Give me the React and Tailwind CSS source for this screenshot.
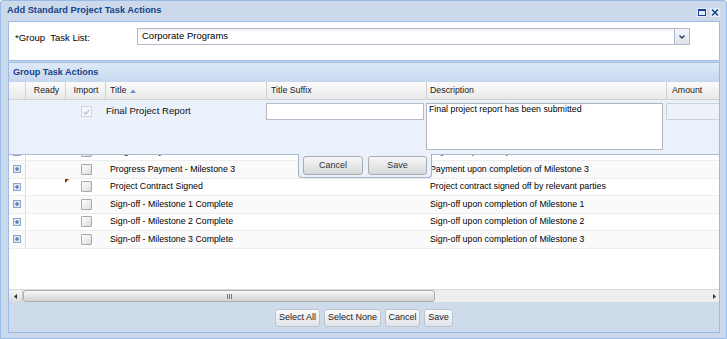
import React from 'react';

const rows = [
  { title: '', desc: '' },
  { title: '', desc: '' },
  { title: 'Progress Payment - Milestone 2', desc: 'Payment upon completion of Milestone 2' },
  { title: 'Progress Payment - Milestone 3', desc: 'Payment upon completion of Milestone 3' },
  { title: 'Project Contract Signed', desc: 'Project contract signed off by relevant parties', dirty: true },
  { title: 'Sign-off - Milestone 1 Complete', desc: 'Sign-off upon completion of Milestone 1' },
  { title: 'Sign-off - Milestone 2 Complete', desc: 'Sign-off upon completion of Milestone 2' },
  { title: 'Sign-off - Milestone 3 Complete', desc: 'Sign-off upon completion of Milestone 3' },
];

function Expander() {
  return (
    <svg width="8" height="8" viewBox="0 0 8 8">
      <rect x="0.5" y="0.5" width="7" height="7" fill="#dbe5f3" stroke="#8ea8cd" />
      <path d="M2 4h4M4 2v4" stroke="#3a5f94" strokeWidth="1" />
    </svg>
  );
}

function Checkbox() {
  return <div className="w-[11px] h-[11px] border border-[#a8a8a8] rounded-[1px] bg-linear-to-br from-[#ffffff] to-[#dcdcdc]" />;
}

function GridButton({ children, w }) {
  return (
    <div className={`${w} h-[18px] flex items-center justify-center rounded-[3px] border border-[#bcc3cc] bg-linear-to-b from-[#fbfbfb] to-[#e2e4e8] text-[9px] text-[#222]`}>
      {children}
    </div>
  );
}

export default function App() {
  return (
    <div className="w-[727px] h-[339px] overflow-hidden bg-[#ccd9ea] border border-[#99bbe8] rounded-t-[3px] flex flex-col font-['Liberation_Sans',Arial,sans-serif]">
      {/* title bar */}
      <div className="h-[20px] shrink-0 flex items-center pl-[6px] pr-[6px]">
        <span className="text-[9.3px] font-bold text-[#15428b]">Add Standard Project Task Actions</span>
        <div className="ml-auto flex items-center gap-[3px] mt-[2px]">
          <svg width="10" height="9" viewBox="0 0 10 9">
            <rect x="0" y="0" width="10" height="9" fill="#e3ebf6" />
            <rect x="1.5" y="2.5" width="7" height="5" fill="none" stroke="#15428b" />
            <rect x="1" y="1" width="8" height="2" fill="#15428b" />
          </svg>
          <svg width="10" height="9" viewBox="0 0 10 9">
            <rect x="0" y="0" width="10" height="9" fill="#e3ebf6" />
            <path d="M2 1.5l6 6M8 1.5l-6 6" stroke="#15428b" strokeWidth="1.5" />
          </svg>
        </div>
      </div>

      <div className="flex-1 flex flex-col pl-[7px] pr-[6px]">
        {/* form panel */}
        <div className="h-[40px] border border-[#99bbe8] bg-white flex items-start pt-[6px] pl-[6px]">
          <div className="w-[122px] text-[9.5px] text-black pt-[3px]">*Group{'\u00a0'} Task List:</div>
          <div className="flex w-[553px] h-[17px]">
            <div className="flex-1 border border-[#b5b8c8] bg-linear-to-b from-[#f1f1f1] to-[#ffffff] to-30% flex items-center pl-[4px] text-[9.5px] text-black">
              Corporate Programs
            </div>
            <div className="w-[15px] border border-l-0 border-[#b5b8c8] bg-linear-to-b from-[#f4f6f9] to-[#dde3ea] flex items-center justify-center">
              <svg width="6" height="4" viewBox="0 0 6 4">
                <path d="M0.5 0.5L3 3l2.5-2.5" fill="none" stroke="#1f3d73" strokeWidth="1.4" />
              </svg>
            </div>
          </div>
        </div>

        {/* grid panel */}
        <div className="mt-px h-[271px] border border-[#99bbe8] bg-white flex flex-col overflow-hidden">
          <div className="h-[19px] shrink-0 bg-linear-to-b from-[#dde9f7] to-[#c6d7ee] flex items-center pl-[4px] text-[9.1px] font-bold text-[#15428b]">
            Group Task Actions
          </div>

          <div className="h-[18px] shrink-0 flex border-b border-[#d0d0d0] bg-linear-to-b from-[#fbfbfb] to-[#e9e9e9] text-[8.8px] text-[#1a1a1a]">
            <div className="w-[17px] shrink-0 border-r border-[#d0d0d0]" />
            <div className="w-[40px] shrink-0 border-r border-[#d0d0d0] flex items-center justify-center pl-[2px]">Ready</div>
            <div className="w-[40px] shrink-0 border-r border-[#d0d0d0] flex items-center justify-center pl-[1px]">Import</div>
            <div className="w-[161px] shrink-0 border-r border-[#d0d0d0] flex items-center pl-[4px] gap-[4px]">
              Title
              <svg width="6" height="4" viewBox="0 0 6 4"><path d="M0 4L3 0.5 6 4z" fill="#6a93cb" /></svg>
            </div>
            <div className="w-[160px] shrink-0 border-r border-[#d0d0d0] flex items-center pl-[4px]">Title Suffix</div>
            <div className="w-[240px] shrink-0 border-r border-[#d0d0d0] flex items-center pl-[3px]">Description</div>
            <div className="w-[80px] shrink-0 flex items-center pl-[5px]">Amount</div>
          </div>

          {/* body */}
          <div className="relative flex-1 overflow-hidden">
            <div className="pt-[8.5px]">
              {rows.map((r, i) => (
                <div key={i} className={`h-[17.5px] flex border-b border-[#ededed] text-[8.8px] text-black ${i % 2 ? 'bg-[#fafafa]' : 'bg-white'}`}>
                  <div className="w-[17px] shrink-0 border-r border-[#dcdcdc] flex items-center pl-[4px]"><Expander /></div>
                  <div className="w-[40px] shrink-0" />
                  <div className="relative w-[40px] shrink-0 flex items-center justify-center">
                    {r.dirty && (
                      <svg className="absolute top-0 left-[-1px]" width="4" height="4" viewBox="0 0 4 4"><path d="M0 0h4L0 4z" fill="#8b2e10" /></svg>
                    )}
                    <Checkbox />
                  </div>
                  <div className="w-[161px] shrink-0 flex items-center pl-[4px] whitespace-nowrap">{r.title}</div>
                  <div className="w-[160px] shrink-0" />
                  <div className="w-[240px] shrink-0 flex items-center pl-[3px] whitespace-nowrap">{r.desc}</div>
                  <div className="w-[80px] shrink-0" />
                </div>
              ))}
            </div>

            {/* row editor overlay */}
            <div className="absolute inset-x-0 top-0 h-[55px] z-10 bg-[#eaf1fb] border-b border-[#aabdd6] flex">
              <div className="w-[57px] shrink-0" />
              <div className="w-[40px] shrink-0 flex justify-center pt-[6px]">
                <div className="w-[11px] h-[11px] border border-[#cfd3d8] bg-[#f5f7fa] flex items-center justify-center">
                  <svg width="7" height="6" viewBox="0 0 7 6"><path d="M0.8 3l2 2L6.2 0.8" fill="none" stroke="#b9bec6" strokeWidth="1.2" /></svg>
                </div>
              </div>
              <div className="w-[160px] shrink-0 pt-[4px] text-[9.6px] text-[#111]">Final Project Report</div>
              <div className="w-[160px] shrink-0 pt-[3px]">
                <div className="w-[158px] h-[17px] border border-[#b5b8c8] bg-white" />
              </div>
              <div className="w-[240px] shrink-0 pt-[3px]">
                <div className="w-[237px] h-[47px] border border-[#b3b6bd] bg-white pl-[2px] text-[8.8px] text-black leading-[11px]">
                  Final project report has been submitted
                </div>
              </div>
              <div className="flex-1 pt-[3px]">
                <div className="w-[60px] h-[17px] border border-[#c9d3de] bg-[#eef2f8]" />
              </div>
            </div>

            {/* editor buttons */}
            <div className="absolute top-[54px] left-[289px] w-[134px] h-[24px] z-20 bg-[#eaf1fb] border border-t-0 border-[#a6b3c4] rounded-b-[4px] flex gap-[5px] pl-[4px] pt-[2px]">
              <div className="w-[60px] h-[19px] rounded-[3px] border border-[#a9adb3] bg-linear-to-b from-[#f7f7f7] to-[#d8d9db] flex items-center justify-center text-[9px] text-[#333]">Cancel</div>
              <div className="w-[59px] h-[19px] rounded-[3px] border border-[#a9adb3] bg-linear-to-b from-[#f7f7f7] to-[#d8d9db] flex items-center justify-center text-[9px] text-[#333]">Save</div>
            </div>
          </div>

          {/* horizontal scrollbar */}
          <div className="h-[13px] shrink-0 flex bg-[#eeeeee] border-t border-[#dadada]">
            <div className="w-[14px] shrink-0 bg-linear-to-b from-[#f4f4f4] to-[#dcdcdc] border-r border-[#c9c9c9] flex items-center justify-center">
              <svg width="3" height="5" viewBox="0 0 3 5"><path d="M3 0v5L0 2.5z" fill="#333" /></svg>
            </div>
            <div className="w-[412px] shrink-0 rounded-[3px] border border-[#adadad] bg-linear-to-b from-[#f7f7f7] to-[#d3d3d3] flex items-center justify-center gap-[1px]">
              <div className="w-px h-[5px] bg-[#777]" />
              <div className="w-px h-[5px] bg-[#777]" />
              <div className="w-px h-[5px] bg-[#777]" />
            </div>
            <div className="flex-1" />
            <div className="w-[9px] shrink-0 flex items-center justify-center">
              <svg width="3" height="5" viewBox="0 0 3 5"><path d="M0 0v5L3 2.5z" fill="#333" /></svg>
            </div>
          </div>

          {/* footer */}
          <div className="h-[30px] shrink-0 bg-[#cedbeb] flex items-center justify-center gap-[4px] pt-[2px]">
            <GridButton w="w-[45px]">Select All</GridButton>
            <GridButton w="w-[57px]">Select None</GridButton>
            <GridButton w="w-[35px]">Cancel</GridButton>
            <GridButton w="w-[29px]">Save</GridButton>
          </div>
        </div>
      </div>
    </div>
  );
}
